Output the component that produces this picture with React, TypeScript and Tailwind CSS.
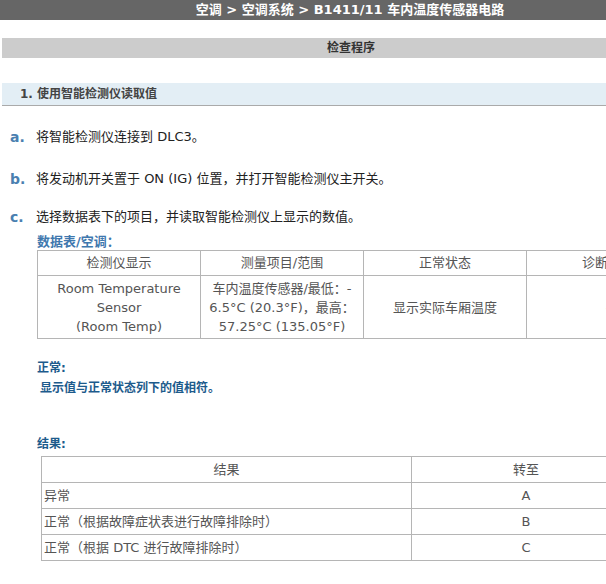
export default function App() {
  const f = { fontFamily: '"DejaVu Sans", "Noto Sans CJK SC", sans-serif' };
  const cell = "border border-[#b5b5b5] text-center text-[#555] px-1";
  return (
    <div className="w-[606px] h-[584px] overflow-hidden bg-white text-[13px]" style={f}>
      <div className="w-[700px]">
        <div className="h-[20px] bg-[#666666] text-white font-bold text-[13px] flex items-center justify-center">
          空调 &gt; 空调系统 &gt; B1411/11 车内温度传感器电路
        </div>
        <div className="mt-[18px] ml-[2px] h-[20px] bg-[#cccccc] text-[#333] font-bold text-[12px] flex items-center justify-center">
          检查程序
        </div>
        <div className="mt-[25px] ml-[2px] h-[23px] bg-[#e3eef5] border-b border-[#aaa] text-[#444] font-bold text-[12px] flex items-center pl-[18px]">
          1. 使用智能检测仪读取值
        </div>
        <div className="mt-[22px] ml-[10px] flex items-center h-[18px] text-[#222]">
          <span className="w-[26px] text-[#4a7fb0] font-bold text-[14px]">a.</span>将智能检测仪连接到 DLC3。
        </div>
        <div className="mt-[24px] ml-[10px] flex items-center h-[18px] text-[#222]">
          <span className="w-[26px] text-[#4a7fb0] font-bold text-[14px]">b.</span>将发动机开关置于 ON (IG) 位置，并打开智能检测仪主开关。
        </div>
        <div className="mt-[20px] ml-[10px] flex items-center h-[18px] text-[#222]">
          <span className="w-[26px] text-[#4a7fb0] font-bold text-[14px]">c.</span>选择数据表下的项目，并读取智能检测仪上显示的数值。
        </div>
        <div className="mt-[6px] ml-[37px] text-[#3f78ae] font-bold text-[13px] h-[18px]">数据表/空调：</div>
        <table className="ml-[37px] border-collapse table-fixed w-[652px]">
          <tbody>
            <tr className="h-[25px]">
              <td className={cell + " w-[163px]"}>检测仪显示</td>
              <td className={cell + " w-[163px]"}>测量项目/范围</td>
              <td className={cell + " w-[163px]"}>正常状态</td>
              <td className={cell + " w-[163px]"}>诊断备注</td>
            </tr>
            <tr className="h-[63px] leading-[19px]">
              <td className={cell}>Room Temperature<br />Sensor<br />(Room Temp)</td>
              <td className={cell + " whitespace-nowrap"}>车内温度传感器/最低：-<br />6.5°C (20.3°F)，最高：<br />57.25°C (135.05°F)</td>
              <td className={cell}>显示实际车厢温度</td>
              <td className={cell}>-</td>
            </tr>
          </tbody>
        </table>
        <div className="mt-[20px] ml-[37px] text-[#1d5b8c] font-bold text-[12px] leading-[18px]">正常:</div>
        <div className="mt-[2px] ml-[40px] text-[#1d5b8c] font-bold text-[12px] leading-[18px]">显示值与正常状态列下的值相符。</div>
        <div className="mt-[38px] ml-[37px] text-[#1d5b8c] font-bold text-[12px] leading-[18px]">结果:</div>
        <table className="mt-[3px] ml-[41px] border-collapse table-fixed w-[600px]">
          <tbody>
            <tr className="h-[26px]">
              <td className={cell + " w-[370px]"}>结果</td>
              <td className={cell}>转至</td>
            </tr>
            {[["异常", "A"], ["正常（根据故障症状表进行故障排除时）", "B"], ["正常（根据 DTC 进行故障排除时）", "C"]].map(([a, b]) => (
              <tr key={b} className="h-[26px]">
                <td className="border border-[#b5b5b5] text-left text-[#555] px-[2px]">{a}</td>
                <td className={cell}>{b}</td>
              </tr>
            ))}
          </tbody>
        </table>
      </div>
    </div>
  );
}
